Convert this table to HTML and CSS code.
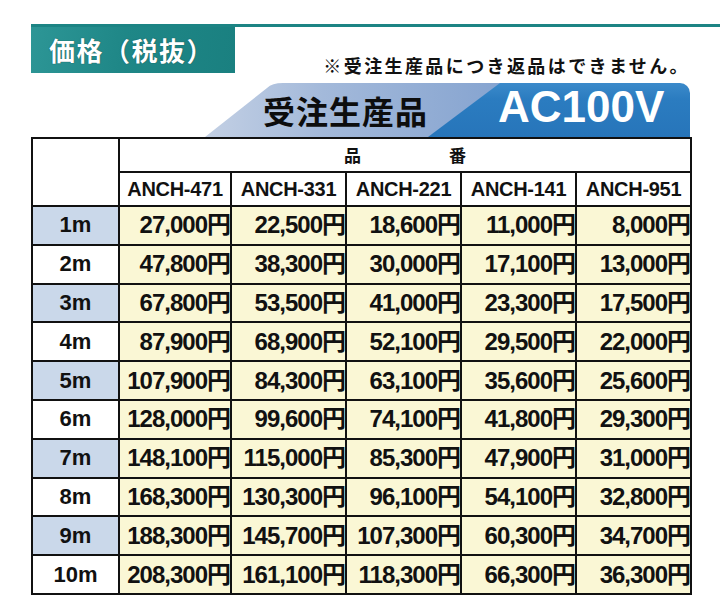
FILE: index.html
```html
<!DOCTYPE html>
<html lang="ja">
<head>
<meta charset="utf-8">
<title>価格（税抜）</title>
<link rel="stylesheet" href="styles.css">
</head>
<body>
<div class="page">
  <div class="titlebar">
    <div class="title">価格（税抜）</div>
    <div class="note">※受注生産品につき返品はできません。</div>
  </div>
  <div class="banner">
    <div class="b-light"><span class="b-jp">受注生産品</span></div>
    <div class="b-dark"><span class="b-ac">AC100V</span></div>
  </div>
  <table class="price">
    <colgroup>
      <col class="c-len"><col class="c-first"><col class="c-p"><col class="c-p"><col class="c-p"><col class="c-p">
    </colgroup>
    <thead>
      <tr class="h1">
        <th class="blank" rowspan="2"></th>
        <th colspan="5" class="hinban"><span>品</span><span>番</span></th>
      </tr>
      <tr class="h2">
        <th>ANCH-471</th><th>ANCH-331</th><th>ANCH-221</th><th>ANCH-141</th><th>ANCH-951</th>
      </tr>
    </thead>
    <tbody>
      <tr class="odd"><th>1m</th><td>27,000円</td><td>22,500円</td><td>18,600円</td><td>11,000円</td><td>8,000円</td></tr>
      <tr><th>2m</th><td>47,800円</td><td>38,300円</td><td>30,000円</td><td>17,100円</td><td>13,000円</td></tr>
      <tr class="odd"><th>3m</th><td>67,800円</td><td>53,500円</td><td>41,000円</td><td>23,300円</td><td>17,500円</td></tr>
      <tr><th>4m</th><td>87,900円</td><td>68,900円</td><td>52,100円</td><td>29,500円</td><td>22,000円</td></tr>
      <tr class="odd"><th>5m</th><td>107,900円</td><td>84,300円</td><td>63,100円</td><td>35,600円</td><td>25,600円</td></tr>
      <tr><th>6m</th><td>128,000円</td><td>99,600円</td><td>74,100円</td><td>41,800円</td><td>29,300円</td></tr>
      <tr class="odd"><th>7m</th><td>148,100円</td><td>115,000円</td><td>85,300円</td><td>47,900円</td><td>31,000円</td></tr>
      <tr><th>8m</th><td>168,300円</td><td>130,300円</td><td>96,100円</td><td>54,100円</td><td>32,800円</td></tr>
      <tr class="odd"><th>9m</th><td>188,300円</td><td>145,700円</td><td>107,300円</td><td>60,300円</td><td>34,700円</td></tr>
      <tr><th>10m</th><td>208,300円</td><td>161,100円</td><td>118,300円</td><td>66,300円</td><td>36,300円</td></tr>
    </tbody>
  </table>
</div>
</body>
</html>
```
FILE: styles.css
```css
html, body {
  margin: 0;
  padding: 0;
  background: #ffffff;
}
body {
  width: 720px;
  height: 598px;
  overflow: hidden;
  font-family: "Liberation Sans", "Noto Sans CJK JP", sans-serif;
  color: #111;
}
.page {
  padding: 24px 0 0 31px;
}
.titlebar {
  display: flex;
  align-items: flex-end;
  justify-content: space-between;
  border-top: 3px solid #1c8484;
  padding-right: 30px;
}
.title {
  box-sizing: border-box;
  width: 204px;
  height: 46px;
  background: linear-gradient(100deg, #2d9696 0%, #1f8787 45%, #1a8080 100%);
  color: #fff;
  font-family: "Noto Sans CJK JP", sans-serif;
  font-weight: 700;
  font-size: 26px;
  line-height: 1;
  letter-spacing: 1.5px;
  display: flex;
  align-items: center;
  padding-left: 18px;
  text-shadow: 0 0 1px rgba(0, 40, 40, 0.8);
}
.note {
  font-family: "Noto Sans CJK JP", sans-serif;
  font-weight: 700;
  font-size: 18px;
  letter-spacing: 2.4px;
  line-height: 20px;
  margin-bottom: -2px;
  color: #111;
}
.banner {
  display: flex;
  margin: 10px 0 0 174px;
  height: 54px;
}
.b-light {
  flex: none;
  width: 295px;
  height: 54px;
  background: linear-gradient(90deg, #c3d0e4 0%, #a3b9da 40%, #86a4d0 100%);
  clip-path: path("M0 54 L62 5 Q67 0 78 0 L295 0 L295 54 Z");
  display: flex;
  align-items: center;
}
.b-jp {
  padding-left: 58px;
  font-family: "Noto Sans CJK JP", sans-serif;
  font-weight: 700;
  font-size: 32px;
  line-height: 1;
  color: #0d0d0d;
  letter-spacing: 1px;
}
.b-dark {
  flex: none;
  width: 262px;
  height: 54px;
  margin-left: -72px;
  background: linear-gradient(180deg, #3b8aca 0%, #2b7cc0 30%, #2775ba 100%);
  clip-path: polygon(72px 0, 100% 0, 100% 100%, 0 100%);
  border-top-right-radius: 10px;
  display: flex;
  align-items: center;
}
.b-ac {
  padding-left: 70px;
  font-family: "Liberation Sans", sans-serif;
  font-weight: 700;
  font-size: 44px;
  line-height: 1;
  color: #fff;
  margin-top: -6px;
}
.price {
  border-collapse: collapse;
  table-layout: fixed;
  width: 659px;
  border: 2px solid #111;
}
.c-len { width: 87px; }
.c-first { width: 112px; }
.c-p { width: 115px; }
.price th, .price td {
  border: 2px solid #111;
  padding: 0;
  line-height: 24px;
  vertical-align: middle;
}
.h1 th, .h2 th {
  background: #fff;
}
.h1 { height: 34px; }
.h2 { height: 34px; }
.hinban {
  font-family: "Noto Sans CJK JP", sans-serif;
  font-size: 17px;
  font-weight: 700;
}
.hinban span {
  display: inline-block;
  margin: 0 44px;
}
.h2 th {
  font-size: 20px;
  font-weight: 700;
  text-align: center;
  letter-spacing: -0.3px;
  white-space: nowrap;
}
tbody tr {
  height: 38.8px;
}
tbody th {
  font-size: 22px;
  font-weight: 700;
  text-align: center;
  background: #fff;
}
tbody tr.odd th {
  background: #cad8ea;
}
tbody td {
  background: #faf7d5;
  font-size: 24px;
  font-weight: 700;
  text-align: right;
  padding-right: 2px;
  letter-spacing: -1px;
  white-space: nowrap;
}
```
